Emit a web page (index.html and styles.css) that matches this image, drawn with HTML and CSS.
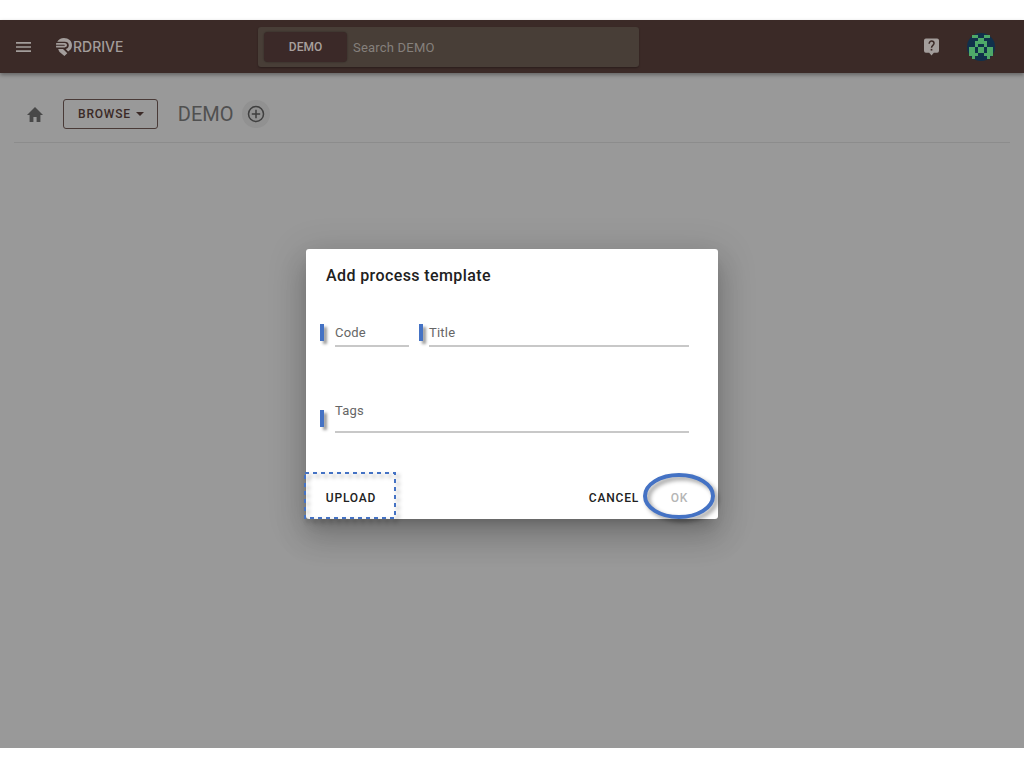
FILE: index.html
```html
<!DOCTYPE html>
<html lang="en">
<head>
<meta charset="utf-8">
<meta name="viewport" content="width=device-width, initial-scale=1">
<title>RDrive</title>
<link rel="stylesheet" href="styles.css">
</head>
<body>
<div class="app">
  <header class="topbar">
    <div class="brand-area">
      <button class="icon-button" type="button" aria-label="Menu">
        <svg width="15" height="10" viewBox="0 0 18 12" fill="currentColor"><path d="M0 0h18v2H0zM0 5h18v2H0zM0 10h18v2H0z"/></svg>
      </button>
      <a class="brand" href="#">
        <svg width="16" height="18" viewBox="0 0 16 18" fill="currentColor"><path d="M1.200 3.800C2.600 1.300 4.900 0 7.900 0 12.500 0 16 3 16 7.200c0 2.800-1.400 5-3.900 6.200l-2.300-2.300c1.900-.5 3-1.900 3-3.800 0-2.400-1.700-3.500-4.100-3.500z"/><path d="M.2 5.100h8.500c3 0 3 4.300 0 4.300H.2C0 8.700 0 8.300 0 7.700h8.300c.8 0 .8-1 0-1H0z"/><path d="M2.200 10.900h4.800l4.300 4.300L8.400 18l-4.200-3.500C3.300 13.800 2.600 12.400 2.200 10.900z"/></svg>
        <span>RDRIVE</span>
      </a>
    </div>
    <div class="search">
      <button class="scope" type="button">DEMO</button>
      <input class="search-input" type="text" placeholder="Search DEMO" aria-label="Search DEMO">
    </div>
    <div class="account">
      <button class="icon-button" type="button" aria-label="Help">
        <svg width="15" height="18" viewBox="0 0 16 18"><path d="M2 0h12q2 0 2 2v11q0 2-2 2h-3.500L8 18l-2.500-3H2q-2 0-2-2V2q0-2 2-2z" fill="currentColor"/><path d="M5.500 5.500C5.500 1.500 10.700 2 10.700 5.100 10.700 7.200 8 7.400 8 9.700" fill="none" stroke="#3b2a27" stroke-width="1.600"/><path d="M7.100 11h1.800v1.800H7.100z" fill="#3b2a27"/></svg>
      </button>
      <button class="icon-button" type="button" aria-label="Account">
        <svg width="28" height="28" viewBox="-2 -2 28 28"><circle cx="12" cy="12" r="14" fill="#10304b"/><path fill="#4ea869" d="M3 0h6v3H3zM15 0h6v3h-6zM9 3h6v3H9zM6 6h12v3H6zM6 9h3v3H6zM15 9h3v3h-3zM0 12h6v6H0zM18 12h6v6h-6zM9 12h6v6H9zM0 18h9v3H0zM15 18h9v3h-9zM3 21h3v3H3zM18 21h3v3h-3z"/></svg>
      </button>
    </div>
  </header>
  <main class="content">
    <nav class="toolbar" aria-label="Browse">
      <a class="home" href="#" aria-label="Home">
        <svg width="16" height="15" viewBox="0 0 16 15" fill="currentColor"><path d="M6.400 15v-5h3.200v5h3.800V8H16L8 0 0 8h2.600v7z"/></svg>
      </a>
      <button class="browse" type="button">BROWSE
        <svg width="8" height="4" viewBox="0 0 8 4" fill="currentColor"><path d="M0 0h8L4 4z"/></svg>
      </button>
      <h1 class="page-title">DEMO</h1>
      <button class="add" type="button" aria-label="Add">
        <svg width="18" height="18" viewBox="0 0 18 18" fill="none" stroke="currentColor" stroke-width="1.500"><circle cx="9" cy="9" r="7.500"/><path d="M9 4.800v8.400M4.800 9h8.400"/></svg>
      </button>
    </nav>
  </main>
  <div class="overlay">
    <form class="dialog" role="dialog" aria-labelledby="dialog-title">
      <h2 class="dialog-title" id="dialog-title">Add process template</h2>
      <div class="fields">
        <div class="field code-field"><i class="marker"></i><label for="code">Code</label><input id="code" type="text"></div>
        <div class="field title-field"><i class="marker"></i><label for="title">Title</label><input id="title" type="text"></div>
        <div class="field tags-field"><i class="marker"></i><label for="tags">Tags</label><input id="tags" type="text"></div>
      </div>
      <div class="actions">
        <button class="action upload" type="button">UPLOAD
          <svg class="upload-outline" width="100" height="54" viewBox="0 0 100 54" fill="none"><path d="M4 2h90v45H4z" stroke="#4472c4" stroke-width="2" stroke-dasharray="4 4"/></svg>
        </button>
        <button class="action cancel" type="button">CANCEL</button>
        <button class="action ok" type="button" disabled>OK
          <svg class="ok-outline" width="76" height="50" viewBox="0 0 76 50" fill="none"><ellipse cx="37" cy="23" rx="34" ry="21" stroke="#4472c4" stroke-width="4"/></svg>
        </button>
      </div>
    </form>
  </div>
</div>
</body>
</html>
```
FILE: styles.css
```css
* {
  box-sizing: border-box;
}

body {
  margin: 0;
  padding: 20px 0;
  min-height: 100vh;
  display: flex;
  background: #fff;
  font-family: Roboto, "Liberation Sans", sans-serif;
}

button,
input {
  font: inherit;
  color: inherit;
  border: 0;
  padding: 0;
  margin: 0;
  background: none;
}

svg {
  display: block;
}

.app {
  position: relative;
  flex: 1;
  display: flex;
  flex-direction: column;
  background: #999;
}

.topbar {
  display: grid;
  grid-template-columns: minmax(140px, 258px) minmax(200px, 381px) 1fr;
  align-items: center;
  padding: 7px 29px 6px 0;
  background: #3b2a27;
  color: #a39d9b;
  box-shadow: 0 2px 4px rgba(0, 0, 0, .35);
}

.brand-area {
  display: flex;
  align-items: center;
  gap: 25px;
  padding-left: 16px;
}

.brand {
  display: flex;
  align-items: center;
  gap: 1px;
  color: inherit;
  font: 500 14px/16px Inter, sans-serif;
  text-decoration: none;
}

.search {
  display: flex;
  align-items: center;
  height: 40px;
  padding: 0 6px;
  gap: 6px;
  border-radius: 3px;
  background: #483e37;
  box-shadow: 0 1px 2px rgba(0, 0, 0, .3);
}

.scope {
  width: 83px;
  height: 30px;
  border-radius: 4px;
  background: #3b2928;
  color: #a8a09e;
  font-size: 12px;
  font-weight: 500;
  box-shadow: 0 0 2px rgba(0, 0, 0, .4);
}

.search-input {
  flex: 1;
  min-width: 0;
  font-size: 13px;
  letter-spacing: .2px;
}

.search-input::placeholder {
  color: #85807c;
  opacity: 1;
}

.account {
  display: flex;
  align-items: center;
  justify-content: flex-end;
  gap: 28px;
}

.content {
  padding: 26px 14px;
}

.toolbar {
  display: flex;
  align-items: center;
  padding: 0 0 13px 13px;
  border-bottom: 1px solid #8c8c8c;
}

.home {
  color: #484848;
}

.browse {
  display: flex;
  align-items: center;
  gap: 5px;
  height: 30px;
  margin: 0 20px;
  padding: 0 13px 0 14px;
  border: 1px solid #493a37;
  border-radius: 3px;
  color: #3b2a27;
  font-size: 12px;
  font-weight: 500;
  letter-spacing: .8px;
}

.page-title {
  margin: 0 8px 0 0;
  color: #505050;
  font-size: 20px;
  line-height: 24px;
  font-weight: 400;
}

.add {
  display: grid;
  place-items: center;
  width: 28px;
  height: 28px;
  border-radius: 50%;
  background: #919191;
  color: #3f3f3f;
}

.overlay {
  position: absolute;
  inset: 0;
  display: flex;
  align-items: center;
  justify-content: center;
}

.dialog {
  width: 412px;
  max-width: 100%;
  border-radius: 3px;
  background: #fff;
  color: #212121;
  box-shadow: 0 9px 12px -6px rgba(0, 0, 0, .2), 0 19px 30px 2px rgba(0, 0, 0, .14), 0 7px 36px 6px rgba(0, 0, 0, .12);
}

.dialog-title {
  margin: 0;
  padding: 15px 20px 0;
  font-size: 16px;
  line-height: 24px;
  font-weight: 500;
  letter-spacing: .4px;
}

.fields {
  display: grid;
  grid-template-columns: 74px 1fr;
  column-gap: 20px;
  padding: 32px 29px 0 29px;
}

.field {
  position: relative;
  height: 27px;
  border-bottom: 2px solid #c8c8c8;
  color: #666;
  font-size: 13px;
  line-height: 26px;
  letter-spacing: .2px;
}

.field label {
  display: block;
}

.field input {
  position: absolute;
  inset: 0;
  width: 100%;
}

.tags-field {
  grid-column: 1 / -1;
  height: 35px;
  margin-top: 51px;
}

.marker {
  position: absolute;
  left: -15px;
  bottom: 4px;
  width: 4px;
  height: 17px;
  background: #4472c4;
  box-shadow: 3px 3px 3px rgba(0, 0, 0, .4);
}

.title-field .marker {
  left: -10px;
}

.actions {
  display: flex;
  align-items: center;
  padding: 44px 8px 0 0;
}

.action {
  position: relative;
  height: 42px;
  font-size: 12px;
  font-weight: 500;
  letter-spacing: .8px;
}

.upload {
  width: 90px;
}

.cancel {
  margin-left: auto;
}

.ok {
  width: 61px;
  margin-left: 10px;
  color: #b5b5b5;
}

.upload-outline,
.ok-outline {
  position: absolute;
  top: 50%;
  left: 50%;
  transform: translate(-50%, -50%);
  pointer-events: none;
  filter: drop-shadow(3px 3px 2px rgba(0, 0, 0, .4));
}
```
